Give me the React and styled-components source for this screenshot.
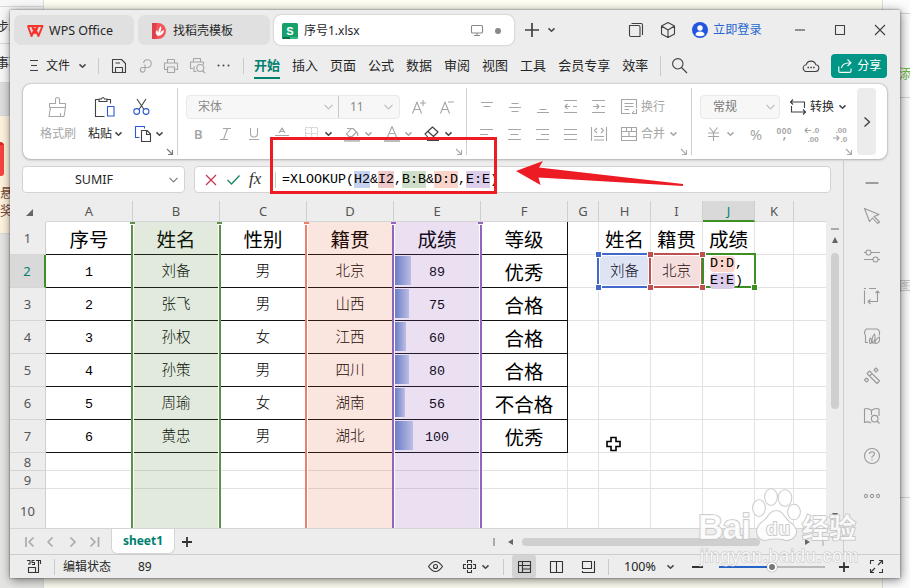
import React from 'react'
import styled, { createGlobalStyle, css } from 'styled-components'

const uiFont = '"Noto Sans", "Noto Sans CJK SC", sans-serif'
const monoFont = '"Liberation Mono", "Noto Sans CJK SC", monospace'

const GlobalStyle = createGlobalStyle`
  * {
    box-sizing: border-box;
  }
  body {
    margin: 0;
    overflow: hidden;
    font-family: ${uiFont};
    font-size: 12px;
    color: #262626;
  }
`

/* desktop behind the window */

const Desktop = styled.div`
  position: relative;
  display: flex;
  width: 910px;
  height: 588px;
  overflow: hidden;
  background: #fffef3;
`

const LeftRail = styled.div`
  display: flex;
  flex-direction: column;
  width: 44px;
  background: #e5e5e4;
  border-right: 1px solid #dcdcdc;
`

const RailItem = styled.div`
  height: ${p => p.$h}px;
  padding-top: ${p => p.$pt || 0}px;
  overflow: hidden;
  white-space: nowrap;
  font-size: 13px;
  line-height: 18px;
  text-indent: -4px;
  color: ${p => p.$color || '#333'};
  background: ${p => p.$bg || '#f8f8f8'};
  border-bottom: 1px solid #d9d9d9;
`

const RedCard = styled.div`
  width: 4px;
  height: 34px;
  margin-bottom: 7px;
  background: #f8433f;
  border-top: 3px solid #d22;
  border-radius: 0 4px 3px 0;
`

const RightRail = styled.div`
  display: flex;
  flex-direction: column;
  width: 28px;
  margin-left: auto;
  background: #fdfdfd;
  border-left: 1px solid #ddd;
  font-size: 13px;
  line-height: 18px;
`

const RightText = styled.div`
  height: ${p => p.$h}px;
  padding-left: 16px;
  padding-top: ${p => p.$pt}px;
  overflow: hidden;
  white-space: nowrap;
  color: ${p => p.$color};
  border-bottom: 1px solid #d5d5d5;
`

const Window = styled.div`
  position: absolute;
  left: 10px;
  top: 10px;
  display: flex;
  flex-direction: column;
  width: 890px;
  height: 568px;
  background: #ededed;
  box-shadow: 0 0 2px rgba(0, 0, 0, 0.5), 1px 2px 10px rgba(0, 0, 0, 0.5);
`

/* shared bits */

const Svg = styled.svg`
  flex: none;
  display: block;
  margin-left: ${p => p.$ml || 0}px;
  overflow: visible;
`

const Icon = ({ w = 16, h = 16, ml, d, c = '#404040', sw = 1.1, fill = 'none', children }) => (
  <Svg
    $ml={ml} width={w} height={h} viewBox={`0 0 ${w} ${h}`}
    fill={fill} stroke={c} strokeWidth={sw} strokeLinejoin="round"
  >
    {d && <path d={d} />}
    {children}
  </Svg>
)

const Caret = ({ ml, c = '#444' }) => <Icon w={7} h={4} ml={ml} c={c} sw={1.5} d="M.5 .4L3.5 3.2L6.5 .4" />
const BigCaret = ({ ml, c = '#777' }) => <Icon w={9} h={6} ml={ml} c={c} d="M.5 .8L4.5 4.8L8.5 .8" />

const Row = styled.div`
  display: flex;
  align-items: center;
`

const Label = styled.span`
  flex: none;
  width: ${p => (p.$w ? `${p.$w}px` : 'auto')};
  margin-left: ${p => p.$ml || 0}px;
  font-size: ${p => p.$size || 12}px;
  font-weight: ${p => p.$weight || 400};
  color: ${p => p.$color || '#262626'};
  line-height: 20px;
  white-space: nowrap;
`

const Divider = styled.span`
  flex: none;
  width: 1px;
  height: ${p => p.$h || 16}px;
  margin-left: ${p => p.$ml || 0}px;
  background: #cacaca;
`

/* title bar */

const TitleBar = styled(Row)`
  height: 41px;
  padding-left: 4px;
`

const FileTab = styled(Row)`
  width: ${p => p.$w}px;
  height: 30px;
  margin-right: 4px;
  padding-top: 1px;
  background: ${p => (p.$active ? '#fff' : '#e0e0e0')};
  border-radius: 7px;
  box-shadow: ${p => (p.$active ? '0 0 2px rgba(0,0,0,.3)' : 'none')};
`

/* menu bar */

const MenuBar = styled(Row)`
  height: 33px;
  padding-bottom: 2px;
`

const Menu = styled.div`
  position: relative;
  margin-left: ${p => p.$ml || 12}px;
  margin-top: -1px;
  font-size: 13px;
  line-height: 24px;
  white-space: nowrap;
  ${p => p.$active && css`
    color: #00806f;
    font-weight: 700;
    &::after {
      content: '';
      position: absolute;
      left: 0;
      right: 0;
      bottom: -2px;
      height: 2px;
      background: #00806f;
    }
  `}
`

const ShareButton = styled(Row)`
  width: 56px;
  height: 24px;
  margin-left: 12px;
  padding-left: 7px;
  border-radius: 4px;
  background: #009584;
`

/* ribbon */

const Ribbon = styled.div`
  display: flex;
  flex: none;
  width: 864px;
  height: 75px;
  margin: 1px 0 0 13px;
  padding: 4px 0;
  background: #fff;
  border-radius: 8px;
  box-shadow: 0 0 2px rgba(0, 0, 0, 0.35), 0 1px 3px rgba(0, 0, 0, 0.18);
`

const Section = styled.div`
  display: grid;
  grid-template-rows: 27px 27px 8px;
  width: ${p => p.$w}px;
  padding-top: 5px;
  border-right: ${p => (p.$last ? 'none' : '1px solid #cfcfcf')};
`

const Launcher = styled(Row)`
  justify-content: flex-end;
  padding: 2px 4px 0 0;
`

const Combo = styled(Row)`
  flex: none;
  width: ${p => p.$w}px;
  height: 24px;
  margin-left: 8px;
  background: #f7f7f7;
  border: 1px solid #e9e9e9;
  border-radius: 4px;
`

const Expand = styled(Row)`
  justify-content: center;
  width: 19px;
  margin-left: 1px;
  background: #ececec;
  border-radius: 4px;
`

/* body */

const Body = styled.div`
  display: flex;
  height: 395px;
`

const Work = styled.div`
  width: 833px;
`

const FormulaRow = styled(Row)`
  height: 42px;
  padding: 0 0 1px 12px;
`

const Box = styled(Row)`
  width: ${p => p.$w}px;
  height: 27px;
  background: #fff;
  border-radius: 4px;
  border: 1px solid #d3d3d3;
  margin-right: 9px;
`

const Formula = styled.div`
  margin-left: 6px;
  font: 13.33px/20px ${monoFont};
  color: #000;
  white-space: nowrap;
`

const Ref = styled.span`
  padding: 1px 0;
  background: ${p => p.$bg};
`

const SheetArea = styled.div`
  display: flex;
  height: 327px;
`

const RowHeads = styled.div`
  width: 36px;
  height: 327px;
  overflow: hidden;
`

const RowHead = styled.div`
  display: flex;
  align-items: center;
  justify-content: center;
  height: ${p => p.$h}px;
  border-bottom: 1px solid #d5d5d5;
  border-right: ${p => (p.$active ? '2px solid #3c8f22' : '1px solid #cfcfcf')};
  background: ${p => (p.$active ? '#d9d9d9' : '#ededed')};
  color: ${p => (p.$active ? '#00806f' : '#555')};
  font-size: 13px;
`

const Corner = styled.div`
  display: flex;
  justify-content: flex-end;
  height: 21px;
  padding: 8px 13px 0 0;
`

const Columns = styled.div`
  display: flex;
  height: 21px;
  border-bottom: 1px solid #d5d5d5;
`

const ColHead = styled.div`
  width: ${p => p.$w}px;
  height: ${p => (p.$active ? 21 : 20)}px;
  text-align: center;
  font: 13px/21px ${uiFont};
  color: ${p => (p.$active ? '#00806f' : '#555')};
  background: ${p => (p.$active ? '#d9d9d9' : 'none')};
  border-right: ${p => (p.$last ? 'none' : '1px solid #cfcfcf')};
  border-bottom: ${p => (p.$active ? '2px solid #3c8f22' : 'none')};
`

const Sheet = styled.div`
  position: relative;
  display: grid;
  grid-template-columns: 87px 87px 87px 87px 87px 87px 31px 52px 52px 52px 39px 32px;
  grid-template-rows: repeat(7, 33px) 18px 18px 40px;
  width: 780px;
  height: 306px;
  overflow: hidden;
  background: #fff;
`

const Cell = styled.div`
  display: flex;
  align-items: center;
  justify-content: center;
  padding-top: 2px;
  white-space: nowrap;
  border-right: ${p => (p.$last ? 'none' : `1px solid ${p.$data ? '#111' : '#e2e2e2'}`)};
  border-bottom: 1px solid ${p => (p.$data ? '#111' : '#e2e2e2')};
  color: #000;
  font: ${p => (p.$big ? `19.5px/24px "Noto Sans CJK SC", sans-serif` : `300 14.5px/20px ${monoFont}`)};
  ${p => p.$num && css`
    padding-top: 3px;
    font-size: 13.33px;
  `}
  ${p => p.$bar && css`
    position: relative;
  `}
`

const Bar = styled.div`
  position: absolute;
  left: 1px;
  top: 1px;
  bottom: 2px;
  background: linear-gradient(90deg, #6689cb, #cad5f0);
`

const ColRange = styled.div`
  position: absolute;
  top: 0;
  bottom: 0;
  left: ${p => p.$x}px;
  width: 90px;
  border: solid ${p => p.$line};
  border-width: 0 2px;
  background: ${p => p.$fill};
  background-clip: padding-box;
  box-shadow: inset 1px 0 #fff, inset -1px 0 #fff;
  &::before, &::after {
    content: '';
    position: absolute;
    top: 0;
    width: 5px;
    height: 2px;
    background: ${p => p.$line};
    box-shadow: 0 1px #fff;
  }
  &::before {
    left: -3px;
  }
  &::after {
    right: -3px;
  }
`

const CellRange = styled.div`
  position: absolute;
  top: 31px;
  left: ${p => p.$x}px;
  width: 54px;
  height: 35px;
  border: 2px solid ${p => p.$line};
  background: ${p => p.$fill};
  background-clip: padding-box;
  box-shadow: inset 0 0 0 1px #fff;
`

const Handle = styled.div`
  position: absolute;
  width: 5px;
  height: 5px;
  left: ${p => p.$x}px;
  top: ${p => p.$y}px;
  background: ${p => p.$c};
  box-shadow: 0 0 0 1px #fff;
`

const Editing = styled.div`
  position: absolute;
  left: 656px;
  top: 31px;
  width: 54px;
  height: 35px;
  padding-left: 6px;
  background: #fff;
  border: 2px solid #3c8f22;
  font: 13.33px/17px ${monoFont};
  color: #000;
`

const Pill = styled.span`
  padding: 0 1px 1px 0;
  border-radius: 4px;
  background: ${p => p.$bg};
`

const VScroll = styled.div`
  display: flex;
  flex-direction: column;
  align-items: center;
  width: 17px;
  height: 306px;
  margin-top: 21px;
  padding-top: 6px;
`

const Thumb = styled.div`
  width: ${p => p.$w}px;
  height: ${p => p.$h}px;
  margin: ${p => p.$m};
  border-radius: 4px;
  background: #cfcfcf;
`

const SheetTabs = styled(Row)`
  height: 26px;
  border-top: 1px solid #d5d5d5;
`

const SheetTab = styled.div`
  width: 64px;
  height: 25px;
  margin-left: 12px;
  background: #fff;
  border: 1px solid #d5d5d5;
  border-top: none;
  border-radius: 0 0 6px 6px;
  color: #00806f;
  font: 700 12px/24px ${uiFont};
  text-align: center;
`

const SideBar = styled.div`
  display: flex;
  flex-direction: column;
  align-items: center;
  gap: 24px;
  width: 57px;
  padding-top: 23px;
  border-left: 1px solid #cdcdcd;
`

const StatusBar = styled(Row)`
  height: 24px;
  border-top: 1px solid #cdcdcd;
`

const ViewButton = styled(Row)`
  justify-content: center;
  width: 24px;
  height: 23px;
  margin-left: 8px;
  background: #d3d3d3;
  border-radius: 3px;
`

const Slider = styled(Row)`
  width: 106px;
  height: 10px;
  margin-left: 16px;
  background: linear-gradient(90deg, #2464c8 50%, #b9b9b9 50%) center / 100% 2px no-repeat;
  justify-content: center;
`

const Knob = styled.div`
  width: 10px;
  height: 10px;
  border-radius: 50%;
  background: #777;
  border: 2px solid #fff;
  box-shadow: 0 0 1px #555;
`

/* marks drawn over the window */

const RedFrame = styled.div`
  position: absolute;
  left: 270px;
  top: 137px;
  width: 227px;
  height: 57px;
  border: 3px solid #ed1c24;
`

const Overlay = styled.svg`
  position: absolute;
  left: 0;
  top: 0;
`

const Watermark = styled.svg`
  position: absolute;
  left: 690px;
  top: 484px;
`

const g = '#a6a6a6'

const columns = [
  ['A', 87], ['B', 87], ['C', 87], ['D', 87], ['E', 87], ['F', 87],
  ['G', 31], ['H', 52], ['I', 52], ['J', 52], ['K', 39], ['', 32]
]

// the tenth row runs on below the visible area
const rowHeights = [33, 33, 33, 33, 33, 33, 33, 18, 18, 45]

const data = [
  ['序号', '姓名', '性别', '籍贯', '成绩', '等级', '', '姓名', '籍贯', '成绩'],
  ['1', '刘备', '男', '北京', '89', '优秀', '', '刘备', '北京'],
  ['2', '张飞', '男', '山西', '75', '合格'],
  ['3', '孙权', '女', '江西', '60', '合格'],
  ['4', '孙策', '男', '四川', '80', '合格'],
  ['5', '周瑜', '女', '湖南', '56', '不合格'],
  ['6', '黄忠', '男', '湖北', '100', '优秀']
]

const menus = ['插入', '页面', '公式', '数据', '审阅', '视图', '工具', '会员专享', '效率']

const Title = () => (
  <TitleBar>
    <FileTab $w={120}>
      <Icon w={16} h={12} ml={13} c="#f5342b" sw={2} d="M.5 1H15.5L11.5 11L8 3.5L4.5 11L1 1M5 1L8 8L11 1" />
      <Label $ml={6} $size={12.5}>WPS Office</Label>
    </FileTab>
    <FileTab $w={132}>
      <Icon w={14} h={16} ml={14} c="none" fill="#f2565a" d="M1 0H6A8 8 0 0 1 6 16H1Q0 16 0 15V1Q0 0 1 0Z">
        <path d="M0 0H5Q2 8 5 16H0Z" fill="#df4049" />
        <path d="M6 13Q2 10 5 7Q6 9 6.500 10Q6 6 9 3Q10 6 8 10Q9 8 12 7Q12 12 6 13Z" fill="#fff" />
      </Icon>
      <Label $ml={7}>找稻壳模板</Label>
    </FileTab>
    <FileTab $w={240} $active>
      <Icon w={16} h={16} ml={8} c="none" fill="#17a06b">
        <rect width="16" height="16" rx="1.500" />
        <path d="M0 14H8V16H1Z" fill="#0b6e48" />
        <path d="M8 14H16L15 16H8Z" fill="#35b884" />
        <text x="8" y="11.500" textAnchor="middle" fontFamily="Liberation Sans" fontWeight="700" fontSize="11" fill="#fff">S</text>
      </Icon>
      <Label $ml={6} $w={166}>序号1.xlsx</Label>
      <Icon w={12} h={11} ml={1} c="#888" d="M1.500 .5H10.500Q11.500 .5 11.500 1.500V7Q11.500 8 10.500 8H1.500Q.5 8 .5 7V1.500Q.5 .5 1.500 .5ZM6 8V10.500M3 10.500H9" />
      <Icon w={6} h={6} ml={12} c="none"><circle cx="3" cy="3" r="3" fill="#888" /></Icon>
    </FileTab>
    <Icon w={14} h={14} ml={7} sw={1.7} d="M7 0V14M0 7H14" />
    <Caret ml={9} />
    <Icon w={14} h={14} ml={74} d="M.5 2.500H9.500Q11 2.500 11 4V13.500H2Q.5 13.500 .5 12ZM2.500 .5H12Q13.500 .5 13.500 2V12" />
    <Icon w={14} h={16} ml={18} d="M7 .5L13.500 4V12L7 15.500L.5 12V4ZM.5 4L7 8L13.500 4M7 8V15.500" />
    <Icon w={16} h={16} ml={17} c="none">
      <circle cx="8" cy="8" r="8" fill="#2455e0" />
      <circle cx="8" cy="6" r="2.700" fill="#fff" />
      <path d="M3.500 13Q3.500 9.500 8 9.500T12.500 13Q8 15.500 3.500 13Z" fill="#fff" />
    </Icon>
    <Label $ml={5} $color="#2566d2" $size={12.2}>立即登录</Label>
    <Icon w={10} h={10} ml={33} d="M0 5H10" />
    <Icon w={10} h={10} ml={30} d="M.5 .5H9.500V9.500H.5Z" />
    <Icon w={10} h={10} ml={30} d="M0 0L10 10M10 0L0 10" />
  </TitleBar>
)

const MainMenu = () => (
  <MenuBar>
    <Icon w={8} h={11} ml={20} d="M0 .5H8M1 5.500H7M0 10.500H8" />
    <Label $ml={8} $w={24}>文件</Label>
    <Caret ml={9} />
    <Divider $ml={12} />
    <Icon w={14} h={14} ml={13} d="M.5 .5H9.500L13.500 4.500V13.500H10.500V8.500H3.500V13.500H.5ZM3.500 4H8M3.500 13.500H10.500" />
    <Icon w={13} h={14} ml={13} c={g} d="M4.500 3.800A3.900 3.900 0 1 1 8.500 8.500H3.500A2.300 2.300 0 1 0 6 11V5.500" />
    <Icon w={14} h={14} ml={12} c={g} d="M3.500 4V.5H10.500V4M3 10.500H.5V4H13.500V10.500H11M3.500 8H10.500V13.500H3.500Z" />
    <Icon w={16} h={15} ml={12} c={g} d="M3.500 4V.5H10.500V4M3 10.500H.5V4H13.500V6.500M4 8V13.500H6.500M12.500 12.500L15 15">
      <circle cx="10.300" cy="10" r="3.500" />
    </Icon>
    <Icon w={13} h={3} ml={11} c="none" fill="#444">
      <circle cx="1.500" cy="1.500" r="1" /><circle cx="6.500" cy="1.500" r="1" /><circle cx="11.500" cy="1.500" r="1" />
    </Icon>
    <Divider $ml={13} />
    <Menu $active $ml={10}>开始</Menu>
    {menus.map(m => <Menu key={m}>{m}</Menu>)}
    <Divider $ml={12} $h={20} />
    <Icon w={15} h={15} ml={11} d="M9.500 9.500L15 15"><circle cx="5.800" cy="5.800" r="5.200" /></Icon>
    <Icon w={16} h={14} ml={116} d="M4 12.500H12A3.400 3.400 0 0 0 12.800 5.700A5 5 0 0 0 3.200 5.700A3.400 3.400 0 0 0 4 12.500Z">
      <path d="M4.500 8.500H6M7.300 8.500H8.800M10.100 8.500H11.600" strokeWidth="1.500" />
    </Icon>
    <ShareButton>
      <Icon w={14} h={14} c="#fff" d="M.8 7.500V12.200Q.8 13.400 2 13.400H11.800Q13 13.400 13 12.200V9.500M3.500 9Q4 4 12.500 3.800M9.500 .5L13 3.800L9.500 7" />
      <Label $ml={5} $color="#fff">分享</Label>
    </ShareButton>
  </MenuBar>
)

const LauncherMark = ({ c = '#777' }) => (
  <Launcher><Icon w={6} h={6} c={c} d="M0 0L5.500 5.500M5.500 1V5.500H1" /></Launcher>
)

const RibbonBar = () => (
  <Ribbon>
    <Section $w={155}>
      <Row>
        <Icon w={20} h={20} ml={25} c={g} d="M1.500 6.500H7.500V2.500Q7.500 .5 9.500 .5T11.500 2.500V6.500H17.500V10.500H1.500ZM2.500 10.500L1 19.500H16L17.500 10.500M12.500 16V19.500" />
        <Icon w={20} h={20} ml={27} d="M4 2.500H.5V19.500H9.500M12 2.500H15.500V6.500M4 4.500H12V2H9.500Q8 -1 6.500 2H4Z">
          <rect x="12.500" y="9.500" width="6.500" height="9.500" stroke="#2b5bd0" />
        </Icon>
        <Icon w={17} h={16} ml={18} d="M4 0L11 10.500M13 0L6 10.500">
          <circle cx="3.700" cy="12.500" r="2.900" stroke="#2b5bd0" /><circle cx="13" cy="12.500" r="2.900" stroke="#2b5bd0" />
        </Icon>
      </Row>
      <Row>
        <Label $ml={17} $w={36} $color={g}>格式刷</Label>
        <Label $ml={12} $w={24}>粘贴</Label>
        <Caret ml={3} />
        <Icon w={16} h={16} ml={13} d="M6.500 4.500H12L15.500 8V15.500H6.500ZM11.500 4.500V8.500H15.500">
          <path d="M4.500 11.500H.5V.5H9.500V2.500" stroke="#2b5bd0" />
        </Icon>
        <Caret ml={5} />
      </Row>
      <LauncherMark />
    </Section>
    <Section $w={289}>
      <Row>
        <Combo $w={214}>
          <Label $ml={11} $w={127} $color="#8a8a8a">宋体</Label>
          <BigCaret ml={-1} c="#bbb" />
          <Divider $ml={5} $h={22} />
          <Label $ml={11} $w={34} $color="#8a8a8a">11</Label>
          <BigCaret c="#bbb" />
        </Combo>
        <Icon w={14} h={14} ml={12} c={g} d="M.5 13.500L5 2L9.500 13.500M2 9.500H8M11 0V6M8 3H14" />
        <Icon w={14} h={14} ml={14} c={g} d="M.5 13.500L5 2L9.500 13.500M2 9.500H8M8 2H14" />
      </Row>
      <Row>
        <Label $ml={16} $w={9} $size={13} $weight={600} $color={g}>B</Label>
        <Icon w={12} h={12} ml={17} c={g} d="M3 .5H11M0 11.500H8M7.500 .5L3.500 11.500" />
        <Icon w={10} h={12} ml={17} c={g} d="M1.500 0V5.500Q1.500 9 5 9T8.500 5.500V0M0 11.500H10" />
        <Icon w={14} h={12} ml={16} c={g} d="M4 5L7 0L10 5M5 3.500H9M0 7.500H14" />
        <Icon w={13} h={13} ml={16} c="#ccc" ><path strokeDasharray="2 1" d="M.5 .5H12.500V12.500H.5ZM6.500 .5V12.500M.5 6.500H12.500" /></Icon>
        <Caret ml={7} />
        <Icon w={17} h={16} ml={12} c={g} d="M3 2.500H9L12.500 6L8 10.500H5L2.500 8L7.500 2.500M12.500 6Q14.500 7.500 13.500 10">
          <path d="M0 14.500H16" stroke="#bbb" strokeWidth="2.500" />
        </Icon>
        <Caret ml={4} c={g} />
        <Icon w={16} h={16} ml={12} c={g} d="M3.500 11L8 .5L12.500 11M5 7.500H11">
          <path d="M0 14.500H16" stroke="#bbb" strokeWidth="3" />
        </Icon>
        <Caret ml={5} c={g} />
        <Icon w={16} h={15} ml={12} d="M1 8L8.500 1L14 6L7.500 12.500H5ZM4 5.500L9.500 10.500M3 14.500H15" />
        <Caret ml={5} />
      </Row>
      <LauncherMark c="#aaa" />
    </Section>
    <Section $w={225}>
      <Row>
        <Icon w={12} h={12} ml={14} c={g} d="M0 1.500H12M2.500 5.500H9.500" />
        <Icon w={12} h={12} ml={16} c={g} d="M2.500 2.500H9.500M0 6.500H12M2.500 10.500H9.500" />
        <Icon w={12} h={12} ml={16} c={g} d="M2.500 8.500H9.500M0 11.500H12" />
        <Icon w={13} h={13} ml={15} c={g} d="M0 .5H13M0 12.500H13M1 6.500H6M3.500 4L1 6.500L3.500 9M9 6.500H13" />
        <Icon w={13} h={13} ml={15} c={g} d="M0 .5H13M0 12.500H13M1 6.500H7M4.500 4L7 6.500L4.500 9M9 6.500H13" />
        <Icon w={16} h={15} ml={16} c={g} d="M9 14.500H.5V.5H15.500V9M3.500 4.500H12.500M3.500 7.500H12.500M3.500 10.500H8M15.500 10V14.500H11M13 12L11 14.500" />
        <Label $ml={4} $color={g}>换行</Label>
      </Row>
      <Row>
        <Icon w={13} h={12} ml={13} c={g} d="M0 1.500H13M0 6.500H8M0 11.500H13" />
        <Icon w={13} h={12} ml={15} c={g} d="M0 1.500H13M2.500 6.500H10.500M0 11.500H13" />
        <Icon w={13} h={12} ml={15} c={g} d="M0 1.500H13M5 6.500H13M0 11.500H13" />
        <Icon w={13} h={12} ml={15} c={g} d="M0 1.500H13M0 6.500H13M0 11.500H13" />
        <Icon w={16} h={14} ml={14} c={g} d="M.5 0V14M15.500 0V14M3 9.500H13M3 13H13M6 1L3.500 3.500L6 6M10 1L12.500 3.500L10 6" />
        <Icon w={16} h={14} ml={14} c={g} d="M.5 .5H15.500V13.500H.5ZM.5 4.500H15.500M.5 9.500H15.500M5.500 .5V4.500M10.500 .5V4.500M8 4.500V9.500" />
        <Label $ml={4} $w={24} $color={g}>合并</Label>
        <Caret ml={5} c={g} />
      </Row>
      <LauncherMark c="#aaa" />
    </Section>
    <Section $w={164} $last>
      <Row>
        <Combo $w={80}>
          <Label $ml={12} $w={53} $color="#777">常规</Label>
          <BigCaret c="#bbb" />
        </Combo>
        <Icon w={16} h={16} ml={10} d="M3 .5L.5 3L3 5.500M.5 3H14.500V9M13 10.500L15.500 13L13 15.500M15.500 13H1.500V7" />
        <Label $ml={4} $w={24}>转换</Label>
        <Caret ml={5} />
      </Row>
      <Row>
        <Icon w={11} h={14} ml={16} c={g} d="M1.500 .5L5.500 5.500L9.500 .5M0 6H11M0 9.500H11M5.500 6V14" />
        <Caret ml={8} c={g} />
        <Label $ml={16} $w={14} $size={14.5} $color={g}>%</Label>
        <Icon w={14} h={14} ml={13} c={g}>
          <text x="-.5" y="6.500" fontSize="8.500" fontFamily="Liberation Sans" fontWeight="700" textLength="15" fill={g} stroke="none">000</text>
          <path d="M7.500 10V11.500L6.500 13.500" strokeWidth="1.600" />
        </Icon>
        <Icon w={14} h={14} ml={14} c={g} d="M6 3.500H0M2.500 1L0 3.500L2.500 6">
          <text x="7.500" y="6" fontSize="8" fontFamily="Liberation Sans" fontWeight="700" fill={g} stroke="none">.0</text>
          <text x="2.500" y="14.500" fontSize="8" fontFamily="Liberation Sans" fontWeight="700" fill={g} stroke="none">.00</text>
        </Icon>
        <Icon w={14} h={14} ml={14} c={g} d="M0 11H6M3.500 8.500L6 11L3.500 13.500">
          <text x="2.500" y="6" fontSize="8" fontFamily="Liberation Sans" fontWeight="700" fill={g} stroke="none">.00</text>
          <text x="7.500" y="14.500" fontSize="8" fontFamily="Liberation Sans" fontWeight="700" fill={g} stroke="none">.0</text>
        </Icon>
      </Row>
      <LauncherMark c="#aaa" />
    </Section>
    <Expand><Icon w={6} h={10} sw={1.4} d="M.5 .5L5.500 5L.5 9.500" /></Expand>
  </Ribbon>
)

const Grid = () => (
  <Sheet>
    {rowHeights.map((h, r) => columns.map(([name], c) => {
      const value = (data[r] || [])[c] || ''
      const isBar = c === 4 && r > 0 && r < 7
      return (
        <Cell
          key={`${r}-${c}`}
          $data={r < 7 && c < 6}
          $big={r === 0 || c === 5}
          $num={/^\d+$/.test(value)}
          $bar={isBar}
          $last={name === ''}
        >
          {isBar && <Bar style={{ width: Math.round(value * 0.18) }} />}
          {value}
        </Cell>
      )
    }))}
    <ColRange $x={85} $line="#5f8f4a" $fill="rgba(85,131,61,.17)" />
    <ColRange $x={259} $line="#e8806a" $fill="rgba(222,82,42,.15)" />
    <ColRange $x={346} $line="#8f66bb" $fill="rgba(132,73,179,.17)" />
    <CellRange $x={551} $line="#4169cc" $fill="rgba(65,95,195,.17)" />
    <CellRange $x={603} $line="#c0504d" $fill="rgba(190,60,60,.17)" />
    <Editing>
      <Pill $bg="#fad6cc">D:D</Pill>,<br />
      <Pill $bg="#dccdea">E:E</Pill>)
    </Editing>
    <Handle $x={550} $y={30} $c="#4169cc" />
    <Handle $x={550} $y={63} $c="#4169cc" />
    <Handle $x={602} $y={30} $c="#c0504d" />
    <Handle $x={602} $y={63} $c="#c0504d" />
    <Handle $x={654} $y={30} $c="#c0504d" />
    <Handle $x={654} $y={63} $c="#c0504d" />
    <Handle $x={706} $y={63} $c="#3c8f22" />
  </Sheet>
)

const Side = () => (
  <SideBar>
    <Icon h={2} c="#888" d="M1.500 1H14.500" sw={1.6} />
    <Icon c="#999" d="M.5 .5L15 6.500L10 8.500L15.500 14L13.500 15.500L8.500 10L5.500 13.500Z" />
    <Icon c="#999" d="M0 4.500H2M7 4.500H16M0 11.500H9M14 11.500H16"><circle cx="4.500" cy="4.500" r="2.500" /><circle cx="11.500" cy="11.500" r="2.500" /></Icon>
    <Icon c="#999" d="M.5 2.500V16M0 .5H2M5 .5H12M13.500 11V3M11.500 5L13.500 3L15.500 5M4 13.500H13.500V11M6.500 11.500L4 13.500L6.500 16" />
    <Icon c="#999" d="M4 14.500H1.500V7.500Q-1 4 2.500 1H13Q17 3 15 7.500M6 15.500Q4.500 12 6.500 10Q8 12 7.500 15ZM8.500 15Q7 10 10.500 6Q12 10 9.500 15ZM11 15Q11 11 15.500 9V12Q15 15.500 11 15.500Z" />
    <Icon c="#999" d="M3 5.500L5.500 3L15.500 13L13 15.500ZM5.500 8L8 5.500M12 0L14 2L12 4L10 2ZM2.500 10L4.500 12L2.500 14L.5 12Z" />
    <Icon c="#999" d="M7.500 2.500Q4 -.5 .5 1V14.500Q4 13 7 15M7.500 2.500V7M7.500 2.500Q11 -.5 15 1V8M13 13L15.500 15.500"><circle cx="10.700" cy="10.700" r="3.300" /></Icon>
    <Icon c="#999"><circle cx="8" cy="8" r="7.500" /><path d="M5.500 6Q5.500 3.700 8 3.700T10.500 6Q10.500 7.300 8 8.500V10M8 11.200V12.600" /></Icon>
    <Icon c="#999"><circle cx="2" cy="8" r="1.600" /><circle cx="8" cy="8" r="1.600" /><circle cx="14" cy="8" r="1.600" /></Icon>
  </SideBar>
)

const Tabs = () => (
  <SheetTabs>
    <Icon w={9} h={10} ml={15} c="#aaa" sw={1.7} d="M1 0V10M8.500 .5L4 5L8.500 9.500" />
    <Icon w={6} h={10} ml={13} c="#aaa" sw={1.7} d="M5.500 .5L1 5L5.500 9.500" />
    <Icon w={6} h={10} ml={17} c="#aaa" sw={1.7} d="M.5 .5L5 5L.5 9.500" />
    <Icon w={9} h={10} ml={14} c="#aaa" sw={1.7} d="M.5 .5L5 5L.5 9.500M8.500 0V10" />
    <SheetTab>sheet1</SheetTab>
    <Icon w={10} h={10} ml={7} c="#333" sw={1.8} d="M5 0V10M0 5H10" />
    <Icon w={2} h={8} ml={301} c="#aaa" sw={2} d="M1 0V8" />
    <Icon w={5} h={6} ml={13} c="none" fill="#666" d="M5 0V6L0 3Z" />
    <Thumb $w={238} $h={8} $m="0 0 0 9px" />
    <Icon w={5} h={6} ml={45} c="none" fill="#666" d="M0 0V6L5 3Z" />
    <Icon w={2} h={8} ml={12} c="#aaa" d="M1 0V8" />
  </SheetTabs>
)

const Status = () => (
  <StatusBar>
    <Icon w={14} h={13} ml={17} c="#333" d="M0 .5H3V4H1M7.500 .5H5V2.500H7.500V4.500H5M9 .5H13.500V4M11.500 .5V12.500H9M1.500 7.500H8.500V12.500H1.500Z" />
    <Divider $ml={13} />
    <Label $ml={8} $w={48}>编辑状态</Label>
    <Label $ml={27} $w={15}>89</Label>
    <Icon w={15} h={11} ml={275} c="#333" d="M.5 5.500Q7.500 -4.500 14.500 5.500Q7.500 15.500 .5 5.500Z"><circle cx="7.500" cy="5.500" r="2" /></Icon>
    <Icon w={13} h={13} ml={20} c="#333" d="M4.500 4.500H8.500V8.500H4.500ZM4.500 3V.5H8.500V3M4.500 10V12.500H8.500V10M3 4.500H.5V8.500H3M10 4.500H12.500V8.500H10" />
    <Caret ml={6} />
    <Divider $ml={14} />
    <ViewButton><Icon w={13} h={12} c="#333" d="M.5 .5H12.500V11.500H.5ZM.5 4.500H12.500M4.500 .5V11.500M4.500 8H12.500" /></ViewButton>
    <Icon w={13} h={12} ml={14} c="#333" d="M.5 .5H12.500V11.500H.5ZM6.500 .5V11.500" />
    <Icon w={13} h={12} ml={19} c="#333" d="M.5 .5H9.500V7.500H.5ZM12.500 0V11.500H0M.5 10V11.500" />
    <Divider $ml={13} />
    <Label $ml={15} $w={43} $size={12.5}>100%</Label>
    <Caret ml={0} />
    <Icon w={11} h={10} ml={18} c="#333" sw={2} d="M0 5H11" />
    <Slider><Knob /></Slider>
    <Icon w={10} h={10} ml={14} c="#333" sw={1.8} d="M5 0V10M0 5H10" />
    <Icon w={13} h={13} ml={21} c="#333" d="M.5 4V.5H4M9 .5H12.500V4M12.500 9V12.500H9M4 12.500H.5V9M8 5L12 1M5 8L1 12" />
  </StatusBar>
)

const App = () => (
  <>
    <GlobalStyle />
    <Desktop>
      <LeftRail>
        <RailItem $h={7} />
        <RailItem $h={37} $pt={10}>步骤</RailItem>
        <RailItem $h={39} $pt={9}>事项</RailItem>
        <RailItem $h={33} $bg="#dedede" />
        <RailItem $h={118} $pt={26} $bg="#fff3df" $color="#7a4a3c">
          <RedCard />
          悬<br />奖
        </RailItem>
      </LeftRail>
      <RightRail>
        <RightText $h={14} $pt={0} />
        <RightText $h={84} $pt={50} $color="#6cc04a">添加</RightText>
        <RightText $h={400} $pt={178} $color="#c4c4c4">图</RightText>
      </RightRail>
      <Window>
        <Title />
        <MainMenu />
        <RibbonBar />
        <Body>
          <Work>
            <FormulaRow>
              <Box $w={163}>
                <Label $ml={52} $w={94} $size={12.5}>SUMIF</Label>
                <BigCaret />
              </Box>
              <Box $w={637}>
                <Icon w={10} h={10} ml={11} c="#c8304f" sw={1.2} d="M0 0L10 10M10 0L0 10" />
                <Icon w={13} h={10} ml={11} c="#1d8a62" sw={1.4} d="M.5 5L4.500 9L12.500 .5" />
                <Icon w={15} h={14} ml={8} c="none" fill="#333">
                  <text x="1" y="11" fontFamily="Liberation Serif" fontStyle="italic" fontSize="17">fx</text>
                </Icon>
                <Divider $ml={12} />
                <Formula>
                  =XLOOKUP(<Ref $bg="#c5d2f0">H2</Ref>&amp;<Ref $bg="#efc9c9">I2</Ref>,<Ref $bg="#cfdec8">B:B</Ref>&amp;<Ref $bg="#fad4cb">D:D</Ref>,<Ref $bg="#dccdea">E:E</Ref>)
                </Formula>
              </Box>
            </FormulaRow>
            <SheetArea>
              <RowHeads>
                <Corner><Icon w={7} h={7} c="none" fill="#666" d="M7 0V7H0Z" /></Corner>
                {rowHeights.map((h, i) => (
                  <RowHead key={i} $h={h} $active={i === 1}>{i + 1}</RowHead>
                ))}
              </RowHeads>
              <div>
                <Columns>
                  {columns.map(([name, w]) => (
                    <ColHead key={name} $w={w} $active={name === 'J'} $last={name === ''}>{name}</ColHead>
                  ))}
                </Columns>
                <Grid />
              </div>
              <VScroll>
                <Icon w={8} h={2} c="#aaa" sw={2} d="M0 1H8" />
                <Svg width="17" height="19"><path d="M6 13H12L9 7Z" fill="#666" /></Svg>
                <Thumb $w={8} $h={156} $m="4px 0 104px" />
                <Icon w={6} h={5} c="none" fill="#666" d="M0 0H6L3 5Z" />
              </VScroll>
            </SheetArea>
            <Tabs />
          </Work>
          <Side />
        </Body>
        <Status />
      </Window>
      <RedFrame />
      <Overlay width="910" height="588" pointerEvents="none">
        <path d="M516 171L543 161L539 167.500L683 184V186L538.500 177.500L540.500 185Z" fill="#ed1c24" />
        <path d="M611 437.500H616V441.500H620V446.500H616V450.500H611V446.500H607V441.500H611Z" fill="#fff" stroke="#000" strokeWidth="1.600" />
      </Overlay>
      <Watermark width="180" height="90" fill="#fff" fillOpacity=".85" stroke="#c4c4c4" strokeWidth="1.600" paintOrder="stroke">
        <g fontFamily="Liberation Sans, Noto Sans CJK SC" fontWeight="700">
          <text x="8" y="55" fontSize="35" textLength="53">Bai</text>
          <text x="112" y="54" fontSize="27" textLength="54" fontFamily="Noto Sans CJK SC">经验</text>
        </g>
        <ellipse cx="69" cy="24" rx="6" ry="8" />
        <ellipse cx="81" cy="13" rx="6" ry="8" />
        <ellipse cx="95" cy="14" rx="6.500" ry="8" />
        <ellipse cx="104" cy="28" rx="6" ry="7.500" />
        <path d="M86 27Q91 27 94 32Q97 37 103 41Q109 47 104 53Q99 58 92 55Q86 54 80 55Q72 58 68 52Q65 45 71 39Q76 36 79 31Q82 27 86 27Z" />
        <text x="76" y="51" fontSize="19" fontWeight="700" fontFamily="Liberation Sans" textLength="24">du</text>
        <text x="10" y="78" fontSize="18" strokeWidth="1" fontFamily="Liberation Sans" textLength="158">jingyan.baidu.com</text>
      </Watermark>
    </Desktop>
  </>
)

export default App
